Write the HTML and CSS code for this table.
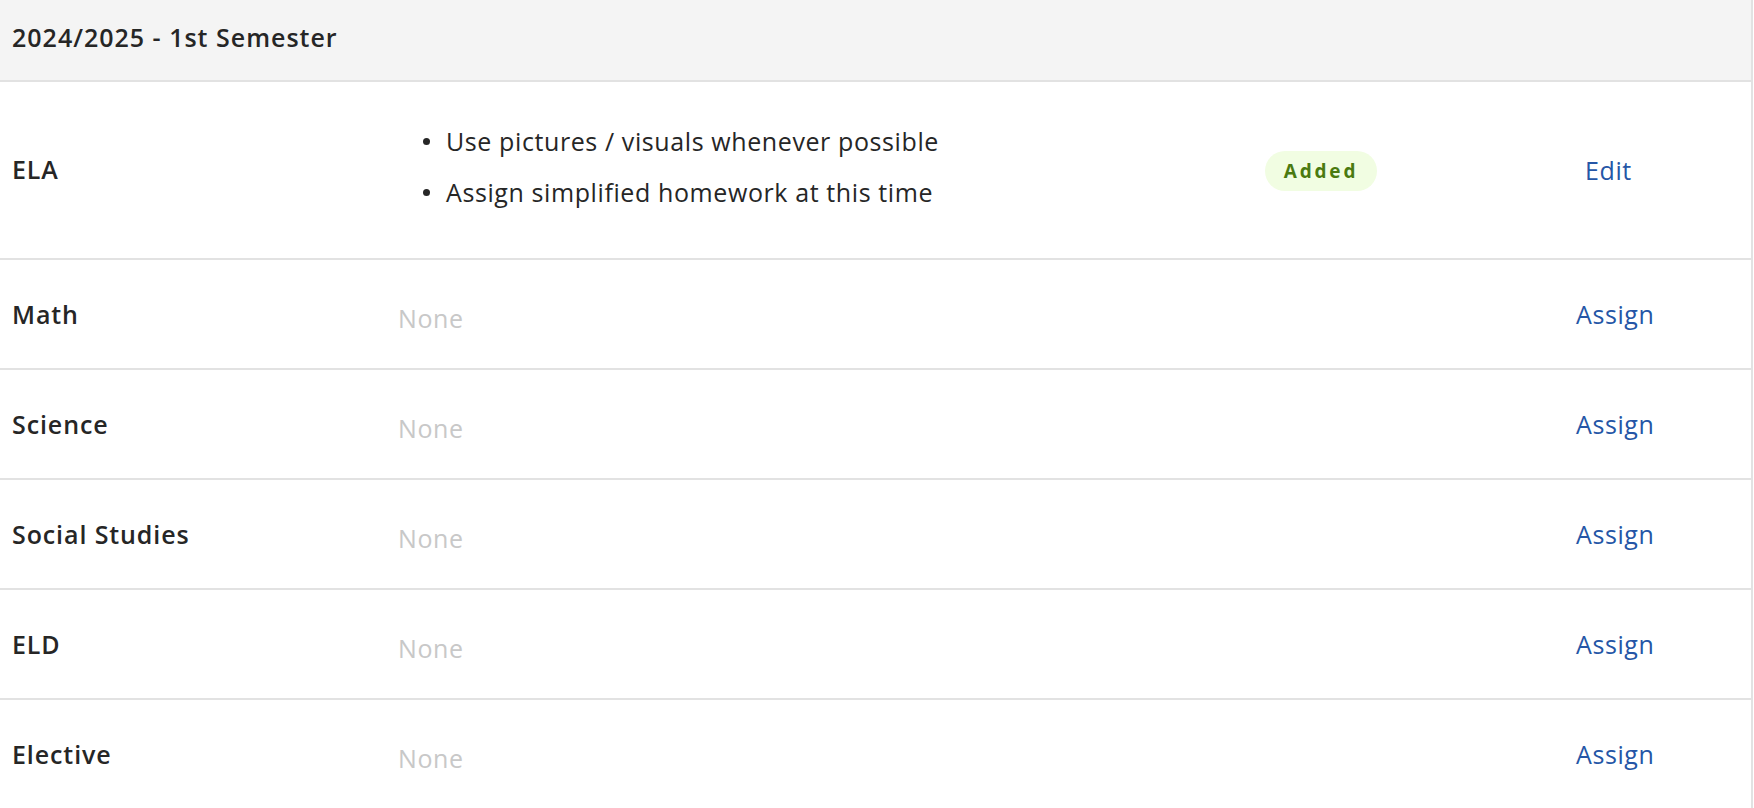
FILE: index.html
```html
<!DOCTYPE html>
<html lang="en">
<head>
<meta charset="utf-8">
<title>Accommodations</title>
<link rel="stylesheet" href="styles.css">
</head>
<body>
<div class="panel">
  <div class="panel-head">2024/2025 - 1st Semester</div>

  <div class="row row-tall">
    <div class="subject">ELA</div>
    <ul class="notes">
      <li>Use pictures / visuals whenever possible</li>
      <li>Assign simplified homework at this time</li>
    </ul>
    <div class="status"><span class="badge">Added</span></div>
    <div class="action"><a class="link link-edit">Edit</a></div>
  </div>

  <div class="row">
    <div class="subject">Math</div>
    <div class="none">None</div>
    <div class="status"></div>
    <div class="action"><a class="link">Assign</a></div>
  </div>

  <div class="row">
    <div class="subject">Science</div>
    <div class="none">None</div>
    <div class="status"></div>
    <div class="action"><a class="link">Assign</a></div>
  </div>

  <div class="row">
    <div class="subject">Social Studies</div>
    <div class="none">None</div>
    <div class="status"></div>
    <div class="action"><a class="link">Assign</a></div>
  </div>

  <div class="row">
    <div class="subject">ELD</div>
    <div class="none">None</div>
    <div class="status"></div>
    <div class="action"><a class="link">Assign</a></div>
  </div>

  <div class="row">
    <div class="subject">Elective</div>
    <div class="none">None</div>
    <div class="status"></div>
    <div class="action"><a class="link">Assign</a></div>
  </div>
</div>
</body>
</html>
```

FILE: styles.css
```css
html, body {
  margin: 0;
  padding: 0;
  background: #ffffff;
}

body {
  font-family: "Open Sans", Lato, sans-serif;
  color: #262626;
  font-size: 25px;
  letter-spacing: 0.6px;
}

.panel {
  width: 1753px;
  box-sizing: border-box;
  border-right: 2px solid #e2e2e2;
}

.panel-head {
  background: #f4f4f4;
  height: 82px;
  box-sizing: border-box;
  padding: 21px 12px 29px;
  line-height: 32px;
  font-weight: 600;
  letter-spacing: 1px;
  border-bottom: 2px solid #e2e2e2;
}

.row {
  display: grid;
  grid-template-columns: 398px 867px 311px 1fr;
  align-items: center;
  height: 108px;
  border-bottom: 2px solid #e2e2e2;
  line-height: 32px;
}

.row-tall {
  height: 176px;
}

.subject {
  padding-left: 12px;
  font-weight: 600;
  letter-spacing: 0.9px;
}

.row-tall .subject {
  padding-bottom: 3px;
}

.none {
  color: #c8c8c8;
  padding-top: 8px;
}

.notes {
  list-style: none;
  margin: 0 0 7px;
  padding: 0 0 0 48px;
}

.notes li {
  position: relative;
  line-height: 51px;
}

.notes li::before {
  content: "";
  position: absolute;
  left: -23px;
  top: 22px;
  width: 7px;
  height: 7px;
  border-radius: 50%;
  background: #262626;
}

.badge {
  display: inline-flex;
  align-items: center;
  justify-content: center;
  height: 40px;
  width: 112px;
  border-radius: 20px;
  background: #f1fde2;
  color: #4a7a10;
  font-size: 19px;
  font-weight: 700;
  letter-spacing: 2.8px;
}

.row-tall .status {
  padding-top: 2px;
}

.link {
  color: #2556a6;
  cursor: pointer;
}

.link-edit {
  margin-left: 9px;
}
```
